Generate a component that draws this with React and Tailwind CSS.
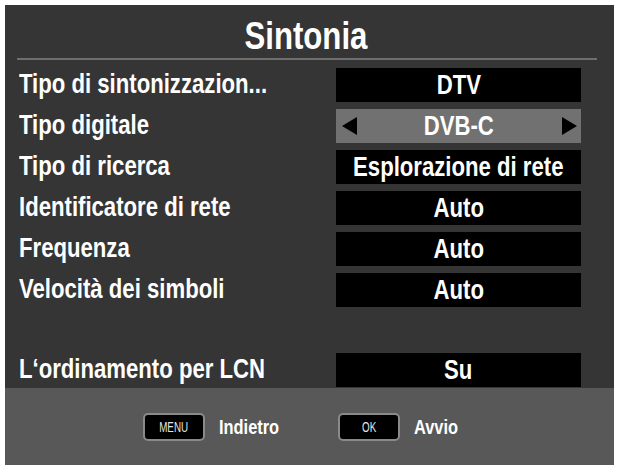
import React from "react";

const font = { fontFamily: '"Liberation Sans", Arial, sans-serif' };

const rows = [
    { label: "Tipo di sintonizzazion...", value: "DTV" },
    { label: "Tipo digitale", value: "DVB-C", selected: true },
    { label: "Tipo di ricerca", value: "Esplorazione di rete" },
    { label: "Identificatore di rete", value: "Auto" },
    { label: "Frequenza", value: "Auto" },
    { label: "Velocità dei simboli", value: "Auto" },
];

// the TV menu font is a narrow bold face, squeeze Liberation Sans to match
const Row = ({ label, value, selected }) => (
    <div className="flex items-center h-[34px]">
        <div className="flex-1 whitespace-nowrap">
            <span className="inline-block origin-left scale-x-[0.82] text-white text-[27px] font-bold leading-none">
                {label}
            </span>
        </div>
        <div
            className={
                "relative w-[245px] h-[34px] flex items-center justify-center " +
                (selected ? "bg-[#717171]" : "bg-black")
            }
        >
            {selected && (
                <svg className="absolute left-[6px] top-[8px]" width="16" height="18" viewBox="0 0 16 18">
                    <polygon points="15,0 15,18 0,9" fill="#000" />
                </svg>
            )}
            <span className="inline-block whitespace-nowrap scale-x-[0.82] text-white text-[27px] font-bold leading-none">
                {value}
            </span>
            {selected && (
                <svg className="absolute right-[4px] top-[8px]" width="16" height="18" viewBox="0 0 16 18">
                    <polygon points="1,0 1,18 16,9" fill="#000" />
                </svg>
            )}
        </div>
    </div>
);

const KeyHint = ({ keyName, text, className }) => (
    <div className={"flex items-center " + className}>
        <div className="w-[62px] h-[28px] bg-black border-2 border-[#8a8a8a] rounded-[5px] flex items-center justify-center">
            <span className="inline-block scale-x-[0.7] text-[#e4e4e4] text-[14px] leading-none">{keyName}</span>
        </div>
        <span className="ml-[14px] inline-block origin-left scale-x-[0.82] text-white text-[20px] font-bold leading-none">
            {text}
        </span>
    </div>
);

export default function App() {
    return (
        <div className="min-h-screen bg-white pt-[5px] pl-[5px]" style={font}>
            <div className="w-[609px] h-[460px] bg-[#353535] flex flex-col">
                <div className="pt-[12px] pr-[8px] flex justify-center">
                    <h1 className="inline-block scale-x-[0.82] text-white text-[38px] font-bold leading-[38px]">
                        Sintonia
                    </h1>
                </div>
                <div className="ml-[12px] mr-[17px] mt-[3px] h-[2px] bg-[#6e6e6e]" />

                <div className="mt-[8px] pl-[14px] pr-[33px] flex flex-col gap-[7px]">
                    {rows.map((r) => (
                        <Row key={r.label} {...r} />
                    ))}
                    <div className="h-[32px]" />
                    <Row label="L‘ordinamento per LCN" value="Su" />
                </div>

                <div className="mt-auto h-[77px] bg-[#585858] flex items-center pl-[138px]">
                    <KeyHint keyName="MENU" text="Indietro" />
                    <KeyHint keyName="OK" text="Avvio" className="ml-[46px]" />
                </div>
            </div>
        </div>
    );
}
